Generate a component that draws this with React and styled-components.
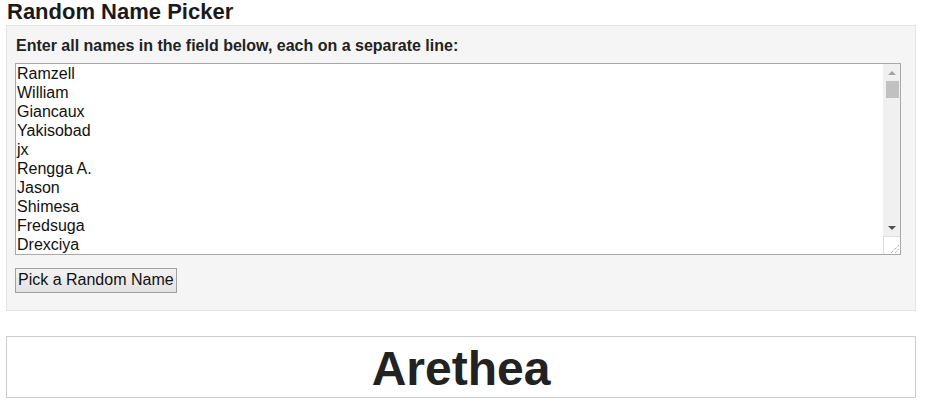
import React, { useRef, useState } from "react";
import styled, { createGlobalStyle } from "styled-components";

const GlobalStyle = createGlobalStyle`
    html, body {
        margin: 0;
        padding: 0;
        background: #ffffff;
        font-family: "Liberation Sans", Arial, sans-serif;
        color: #222222;
    }
`;

const Page = styled.div`
    width: 910px;
    padding: 0 0 0 6px;
`;

const Title = styled.h2`
    margin: 0;
    padding: 0 0 0 1px;
    height: 25px;
    font-size: 22px;
    line-height: 24px;
    font-weight: bold;
    color: #1a1a1a;
`;

const Panel = styled.div`
    background: #f5f5f5;
    border: 1px solid #e3e3e3;
    padding: 11px 8px 17px 8px;
    display: flex;
    flex-direction: column;
    align-items: flex-start;
`;

const Label = styled.label`
    display: block;
    font-size: 16px;
    font-weight: bold;
    line-height: 18px;
    padding-left: 1px;
    margin-bottom: 8px;
    color: #222222;
`;

const Field = styled.div`
    box-sizing: border-box;
    width: 886px;
    height: 192px;
    border: 1px solid #a9a9a9;
    background: #ffffff;
    display: flex;
`;

const NameArea = styled.textarea`
    flex: 1;
    margin: 0;
    padding: 0 1px;
    border: none;
    background: transparent;
    font-family: "Liberation Sans", Arial, sans-serif;
    font-size: 16px;
    line-height: 19px;
    color: #111111;
    resize: none;
    outline: none;
    overflow-y: scroll;
    scrollbar-width: none;

    &::-webkit-scrollbar {
        display: none;
    }
`;

const Rail = styled.div`
    width: 16px;
    display: flex;
    flex-direction: column;
    background: #f0f0f0;
    border-left: 1px solid #f0f0f0;
`;

const ArrowButton = styled.div`
    height: 17px;
    display: flex;
    align-items: center;
    justify-content: center;
    cursor: default;

    &::after {
        content: "";
        width: 0;
        height: 0;
        border-left: 4px solid transparent;
        border-right: 4px solid transparent;
        ${(p) =>
            p.$down
                ? `border-top: 4px solid ${p.$disabled ? "#a3a3a3" : "#505050"};`
                : `border-bottom: 4px solid ${p.$disabled ? "#a3a3a3" : "#505050"};`}
    }
`;

const Track = styled.div`
    flex: 1;
    display: flex;
    flex-direction: column;
    align-items: center;
`;

const Thumb = styled.div`
    width: 13px;
    height: 17px;
    background: #c1c1c1;
`;

const Grip = styled.div`
    height: 17px;
    margin-left: -1px;
    background: #ffffff;
    border-left: 1px solid #dcdcdc;
    border-top: 1px solid #dcdcdc;
    display: flex;
    align-items: flex-end;
    justify-content: flex-end;

    svg {
        display: block;
    }
`;

const PickButton = styled.button`
    margin-top: 13px;
    height: 25px;
    padding: 1px 2px 2px 2px;
    font-family: "Liberation Sans", Arial, sans-serif;
    font-size: 16px;
    color: #111111;
    background: linear-gradient(#f2f2f2, #e3e3e3);
    border: 1px solid #a0a0a0;
    border-radius: 0;
    cursor: pointer;
`;

const Result = styled.div`
    margin-top: 25px;
    height: 58px;
    border: 1px solid #cccccc;
    background: #ffffff;
    display: flex;
    align-items: center;
    justify-content: center;
    font-size: 48px;
    font-weight: bold;
    color: #222222;
    padding-top: 2px;
`;

const shownNames = [
    "Ramzell",
    "William",
    "Giancaux",
    "Yakisobad",
    "jx",
    "Rengga A.",
    "Jason",
    "Shimesa",
    "Fredsuga",
    "Drexciya",
];

const moreNames = [
    "Arethea", "Marlon", "Kenji", "Sofia", "Lukas", "Daniela", "Oskar", "Mirae",
    "Tobias", "Imelda", "Haruto", "Noor", "Beatrix", "Cyril", "Dewi", "Emilio",
    "Farah", "Gustav", "Hana", "Ibrahim", "Jolene", "Kaito", "Leona", "Mateus",
    "Nadia", "Orlando", "Priya", "Quentin", "Rosalie", "Santiago", "Tamsin",
    "Umar", "Valentina", "Wendell", "Ximena", "Yusuf", "Zelda", "Adrian",
    "Bianca", "Corwin", "Delphine", "Elias", "Fiona", "Gideon", "Helga",
    "Ivan", "Juniper", "Kasimir", "Lorna", "Milo", "Nerissa", "Otto",
    "Penelope", "Rafael", "Selma", "Theo", "Ursula", "Viktor", "Willa",
    "Yara", "Zane", "Amara", "Bastian", "Celeste", "Dorian", "Elodie",
    "Felix", "Greta", "Hugo", "Isolde", "Jasper", "Katya", "Leander",
    "Maren", "Nikolai", "Ophelia", "Pascal", "Rhea", "Silas", "Tilda",
];

const TRACK_SPACE = 155 - 17;

const App = () => {
    const [names, setNames] = useState([...shownNames, ...moreNames].join("\n"));
    const [picked, setPicked] = useState("Arethea");
    const [scroll, setScroll] = useState(0);
    const areaRef = useRef(null);

    const pick = () => {
        const list = names.split("\n").map((n) => n.trim()).filter(Boolean);
        if (list.length) setPicked(list[Math.floor(Math.random() * list.length)]);
    };

    const onScroll = (e) => {
        const el = e.target;
        const max = el.scrollHeight - el.clientHeight;
        setScroll(max > 0 ? el.scrollTop / max : 0);
    };

    const step = (dir) => {
        if (areaRef.current) areaRef.current.scrollTop += dir * 19;
    };

    return (
        <Page>
            <GlobalStyle />
            <Title>Random Name Picker</Title>
            <Panel>
                <Label htmlFor="names">Enter all names in the field below, each on a separate line:</Label>
                <Field>
                    <NameArea
                        id="names"
                        ref={areaRef}
                        value={names}
                        onChange={(e) => setNames(e.target.value)}
                        onScroll={onScroll}
                        spellCheck={false}
                    />
                    <Rail>
                        <ArrowButton $disabled={scroll === 0} onClick={() => step(-1)} />
                        <Track>
                            <Thumb style={{ marginTop: Math.round(scroll * TRACK_SPACE) }} />
                        </Track>
                        <ArrowButton $down $disabled={scroll === 1} onClick={() => step(1)} />
                        <Grip>
                            <svg width="12" height="12" viewBox="0 0 12 12">
                                <line x1="3" y1="11" x2="11" y2="3" stroke="#8a8a8a" strokeWidth="1" strokeDasharray="1 1" />
                                <line x1="7" y1="11" x2="11" y2="7" stroke="#8a8a8a" strokeWidth="1" strokeDasharray="1 1" />
                            </svg>
                        </Grip>
                    </Rail>
                </Field>
                <PickButton onClick={pick}>Pick a Random Name</PickButton>
            </Panel>
            <Result>{picked}</Result>
        </Page>
    );
};

export default App;
